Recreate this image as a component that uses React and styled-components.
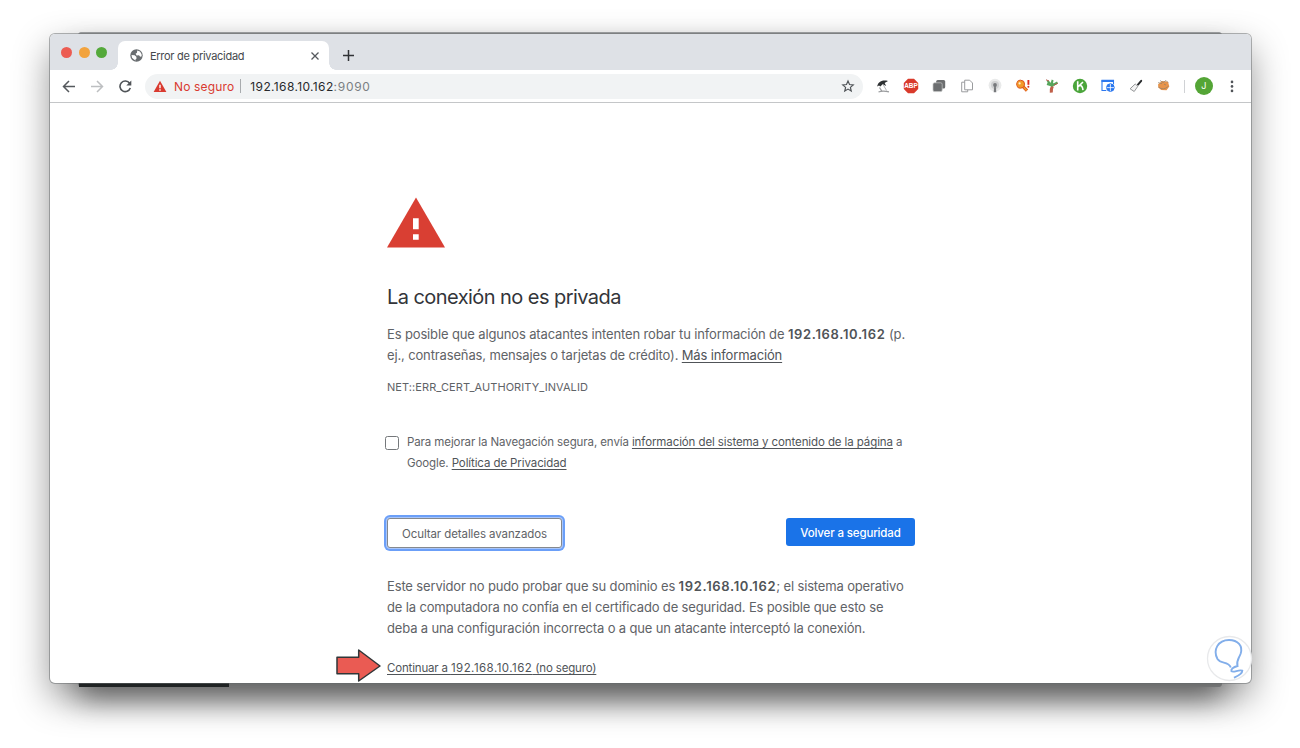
import React from 'react';
import styled, { createGlobalStyle } from 'styled-components';

const GlobalStyle = createGlobalStyle`
  * {
    box-sizing: border-box;
  }
  body {
    margin: 0;
    background: #fff;
    font-family: Inter, 'Liberation Sans', sans-serif;
    -webkit-font-smoothing: antialiased;
  }
`;

const Desktop = styled.div`
  position: relative;
  width: 1300px;
  height: 748px;
  padding: 34px 49px 64px 50px;
  overflow: hidden;
`;

const BackWindow = styled.div`
  position: absolute;
  left: 78px;
  top: 32px;
  width: 1144px;
  height: 655px;
  background: #a3a5a5;
  border: 1px solid #a4a6a8;
  border-radius: 3px;
  box-shadow: 0 16px 26px -3px rgba(0, 0, 0, 0.42);
`;

const BackStrip = styled.div`
  position: absolute;
  left: 0;
  bottom: -1px;
  width: 150px;
  height: 5px;
  background: #2f3435;
`;

const Window = styled.div`
  position: relative;
  height: 649px;
  display: flex;
  flex-direction: column;
  background: #fff;
  border-radius: 5px;
  box-shadow: 0 0 0 1px rgba(100, 104, 106, 0.5), 0 15px 36px rgba(0, 0, 0, 0.42);
`;

const TabStrip = styled.div`
  height: 36px;
  flex: none;
  display: flex;
  align-items: flex-end;
  background: #dee1e6;
  border-radius: 5px 5px 0 0;
`;

const Lights = styled.div`
  width: 68px;
  height: 36px;
  padding: 13px 0 0 11px;
  display: flex;
  gap: 6.5px;
`;

const Light = styled.span`
  width: 11px;
  height: 11px;
  border-radius: 50%;
  background: ${props => props.color};
`;

const Tab = styled.div`
  position: relative;
  width: 211px;
  height: 29px;
  padding: 0 9px 0 12px;
  display: flex;
  align-items: center;
  background: #fff;
  border-radius: 7px 7px 0 0;
  svg {
    flex: none;
  }
  &::before,
  &::after {
    content: '';
    position: absolute;
    bottom: 0;
    width: 7px;
    height: 7px;
  }
  &::before {
    left: -7px;
    background: radial-gradient(circle at 0 0, transparent 6.5px, #fff 7px);
  }
  &::after {
    right: -7px;
    background: radial-gradient(circle at 100% 0, transparent 6.5px, #fff 7px);
  }
`;

const TabTitle = styled.span`
  flex: 1;
  margin-left: 7px;
  font-size: 11px;
  letter-spacing: -0.28px;
  color: #45494d;
  white-space: nowrap;
`;

const NewTab = styled.div`
  height: 29px;
  margin-left: 14px;
  display: flex;
  align-items: center;
`;

const Toolbar = styled.div`
  height: 33px;
  flex: none;
  display: flex;
  align-items: center;
  padding: 0 12px 0 12px;
  background: #fff;
  border-bottom: 1px solid #c4c6c8;
`;

const NavIcons = styled.div`
  width: 83px;
  display: flex;
  gap: 14px;
`;

const AddressBar = styled.div`
  width: 718px;
  height: 25px;
  padding: 0 8px;
  display: flex;
  align-items: center;
  border-radius: 13px;
  background: #f1f3f4;
  font-size: 12px;
  white-space: nowrap;
`;

const NotSecure = styled.span`
  margin-left: 7px;
  color: #d93a30;
  letter-spacing: 0.16px;
`;

const Divider = styled.span`
  width: 1px;
  height: 14px;
  margin: 0 9px 0 6px;
  background: #a8abae;
`;

const Url = styled.span`
  flex: 1;
  color: #27292c;
  letter-spacing: 0.36px;
  span {
    color: #7b7f83;
    letter-spacing: 0.7px;
  }
`;

const Extensions = styled.div`
  display: flex;
  margin-left: 12px;
  gap: 12.1px;
  svg {
    flex: none;
  }
`;

const BarLine = styled.span`
  width: 1px;
  height: 13px;
  margin: 0 10px 0 12px;
  background: #d0d2d5;
`;

const Avatar = styled.span`
  width: 18px;
  height: 18px;
  margin-right: 12px;
  border-radius: 50%;
  background: #54a536;
  color: #fff;
  font-size: 9px;
  line-height: 18px;
  text-align: center;
`;

const Page = styled.main`
  width: 528px;
  margin-left: 337px;
  padding-top: 94px;
  color: #5f6367;
`;

const WarningSign = styled.svg`
  display: block;
  width: 58px;
  height: 51px;
`;

const Title = styled.h1`
  margin: 34px 0 0;
  font-size: 20px;
  line-height: 30px;
  font-weight: 400;
  letter-spacing: ${props => props.spacing}px;
  color: #333539;
`;

const Line = styled.div`
  height: 21px;
  line-height: 21px;
  font-size: ${props => props.size || 13}px;
  letter-spacing: ${props => props.spacing || 0}px;
  white-space: nowrap;
  strong {
    font-weight: 600;
    color: #505458;
    letter-spacing: 0.66px;
  }
`;

const Host = styled.span`
  letter-spacing: 0.46px;
`;

const Link = styled.a`
  text-decoration: underline;
  text-decoration-thickness: 1px;
  text-underline-offset: 2px;
  color: #505458;
`;

const Intro = styled.section`
  margin-top: 12px;
`;

const ErrorCode = styled.div`
  margin-top: 11px;
`;

const OptIn = styled.label`
  display: flex;
  margin-top: 34px;
  margin-left: -2px;
`;

const CheckBox = styled.span`
  width: 14px;
  height: 14px;
  margin: 4px 8px 0 0;
  border: 1px solid #75787b;
  border-radius: 2.5px;
`;

const Buttons = styled.div`
  display: flex;
  justify-content: space-between;
  align-items: flex-start;
  margin-top: 44px;
`;

const DetailsButton = styled.button`
  width: 175px;
  height: 30px;
  padding: 2px 0 0;
  border: 1px solid #85898d;
  border-radius: 3px;
  background: #fff;
  box-shadow: 0 0 0 1px #a9c6fb, 0 0 0 3px #6b9ff8;
  font: 400 11.5px Inter, sans-serif;
  letter-spacing: ${props => props.spacing}px;
  color: #5f6367;
`;

const SafetyButton = styled.button`
  width: 129px;
  height: 28px;
  padding: 2px 0 0;
  border: 0;
  border-radius: 3px;
  background: #1a73e8;
  font: 500 11.5px Inter, sans-serif;
  letter-spacing: ${props => props.spacing}px;
  color: #fff;
`;

const Details = styled.section`
  margin-top: 28px;
`;

const Proceed = styled.div`
  margin-top: 19px;
`;

const Arrow = styled.svg`
  position: absolute;
  left: 335px;
  top: 648px;
`;

const Bubble = styled.svg`
  position: absolute;
  left: 1206px;
  top: 635px;
`;

const Globe = () => (
  <svg width="13" height="13" viewBox="0 0 13 13">
    <circle cx="6.5" cy="6.5" r="6.2" fill="#6a6e71" />
    <path d="M1.5 6l3.2.3 1.6 1.5.3 1.6-1 .8v1.2L4 10.6 2 8.8z" fill="#fff" />
    <path d="M7.2 1.4L10 2.6l1.6 2.6.1 2-1.5.5-1.2-1.5-2.4.2-1-1.6L7 3.7z" fill="#fff" />
  </svg>
);

const ExtensionIcons = () => (
  <Extensions>
    {/* umbrella */}
    <svg width="16" height="16" viewBox="0 0 16 16">
      <path d="M2.2 8.6C3 4.2 6.4 1.6 13 3L9.6 5l1.6 3L7.6 6.2 5.4 8.4 4 7.4z" fill="#2c2f31" />
      <path d="M8 6.5l3.6 6" stroke="#b4b6b8" strokeWidth="1" />
      <path d="M4.5 9.5l2.6 4M3.5 14q4-1.6 10.5-.2" fill="none" stroke="#9a9c9e" strokeWidth="1.3" />
    </svg>
    {/* ad block */}
    <svg width="16" height="16" viewBox="0 0 16 16">
      <path d="M5 .8h6L15.2 5v6L11 15.2H5L.8 11V5z" fill="#d93a2b" />
      <text x="8" y="10.4" textAnchor="middle" fontFamily="Liberation Sans, sans-serif" fontSize="6.4" fontWeight="700" fill="#fff">ABP</text>
    </svg>
    {/* stacked windows */}
    <svg width="16" height="16" viewBox="0 0 16 16">
      <rect x="5.2" y="2" width="9" height="8.5" rx="1.5" fill="#6c6e70" />
      <rect x="2" y="4.8" width="9.2" height="8.8" rx="1.5" fill="#6c6e70" stroke="#c4c5c6" strokeWidth=".7" />
    </svg>
    {/* copied pages */}
    <svg width="16" height="16" viewBox="0 0 16 16" fill="#fff" stroke="#9a9c9e">
      <path d="M2.7 4.2h6v9.6h-6z" />
      <path d="M5.7 2.2h5l2.8 2.8v6.8H5.7z" />
    </svg>
    {/* broadcast */}
    <svg width="16" height="16" viewBox="0 0 16 16">
      <circle cx="8" cy="7.2" r="6.4" fill="#e9eaea" />
      <circle cx="8" cy="7" r="4" fill="#cfd0d1" />
      <circle cx="8" cy="7" r="1.9" fill="#77797c" />
      <path d="M7.2 8h1.6l.5 6.3H6.7z" fill="#77797c" />
    </svg>
    {/* key */}
    <svg width="16" height="16" viewBox="0 0 16 16">
      <path d="M7 7.5l5 5.2" stroke="#dc5420" strokeWidth="3.2" />
      <path d="M7 7.5l4.7 4.9" stroke="#f1a12d" strokeWidth="1.4" />
      <circle cx="5.6" cy="6.2" r="4" fill="#f29a2a" stroke="#dc5420" strokeWidth="1" />
      <circle cx="4.6" cy="5.4" r="1.1" fill="#fff0d9" />
      <path d="M13.4 2v4.8" stroke="#da2d23" strokeWidth="1.9" />
      <circle cx="13.4" cy="8.8" r="1" fill="#da2d23" />
    </svg>
    {/* palm */}
    <svg width="16" height="16" viewBox="0 0 16 16" fill="none">
      <path d="M7.3 14.6q-.3-4 1.2-6.6" stroke="#c0604a" strokeWidth="3" />
      <path d="M8.5 8L3.5 3M8 7.5L3 6M8.3 7q-.8-3 .4-5M8 7.5l5.5-3" stroke="#56a65c" strokeWidth="2.2" />
      <path d="M2 1.8l3 1.2M10 7.3l3.8-2.1" stroke="#b45c4c" strokeWidth="1" />
    </svg>
    {/* green k */}
    <svg width="16" height="16" viewBox="0 0 16 16">
      <circle cx="8" cy="8" r="7.2" fill="#4ba53b" />
      <path d="M5.7 3.3v9.3M11 4L6.3 8.6M7.5 7.5q3-.5 3.5 4.7" fill="none" stroke="#fff" strokeWidth="1.6" />
    </svg>
    {/* web window */}
    <svg width="16" height="16" viewBox="0 0 16 16" fill="none" stroke="#2c78ef">
      <path d="M6.3 12.5H2V2.3h11.5v4" strokeWidth="1.1" />
      <path d="M1.5 3h12.5" strokeWidth="2" />
      <circle cx="10.4" cy="9.6" r="3.8" fill="#2c78ef" />
      <path d="M6.8 9.6h7.2M10.4 6v7.2" stroke="#fff" strokeWidth=".8" />
    </svg>
    {/* brush */}
    <svg width="16" height="16" viewBox="0 0 16 16">
      <path d="M13.2 2.8L10 6.6" stroke="#292c2e" strokeWidth="2" strokeLinecap="round" />
      <path d="M7.2 6l2.6 2.3-3.6 5.2-4.1-2.7z" fill="#f4f4f4" stroke="#888a8c" strokeWidth=".9" />
    </svg>
    {/* cookie */}
    <svg width="16" height="16" viewBox="0 0 16 16">
      <path d="M2 6.5L6 3l6 .7 1.3 4.8-2.8 3.7-5.3-.2L2.4 9.4z" fill="#e8944a" />
      <path d="M2 4.6l4 1M4 2.5l3 2 3-2 2.2 2.2M2.4 9q5 4 10-.7M8 6.2l2 .8" fill="none" stroke="#8f7f6c" strokeWidth=".7" />
    </svg>
  </Extensions>
);

const App = () => {
  return (
    <Desktop>
      <GlobalStyle />
      <BackWindow>
        <BackStrip />
      </BackWindow>
      <Window>
        <TabStrip>
          <Lights>
            <Light color="#ec5c52" />
            <Light color="#f2a33d" />
            <Light color="#54a93b" />
          </Lights>
          <Tab>
            <Globe />
            <TabTitle>Error de privacidad</TabTitle>
            <svg width="10" height="10" viewBox="0 0 10 10" stroke="#55595d" strokeWidth="1.3">
              <path d="M1.5 1.5l7 7M8.5 1.5l-7 7" />
            </svg>
          </Tab>
          <NewTab>
            <svg width="11" height="11" viewBox="0 0 11 11" stroke="#303336" strokeWidth="1.5">
              <path d="M5.5 0v11M0 5.5h11" />
            </svg>
          </NewTab>
        </TabStrip>
        <Toolbar>
          <NavIcons>
            <svg width="14" height="14" viewBox="0 0 14 14" fill="none" stroke="#55595d" strokeWidth="1.5">
              <path d="M13 7.5H1.8M7 2L1.5 7.5 7 13" />
            </svg>
            <svg width="14" height="14" viewBox="0 0 14 14" fill="none" stroke="#bdbfc1" strokeWidth="1.5">
              <path d="M1 7.5h11.2M7 2l5.5 5.5L7 13" />
            </svg>
            <svg width="14" height="14" viewBox="0 0 14 14" fill="none" stroke="#505458" strokeWidth="1.6">
              <path d="M11.6 4.2A5.3 5.3 0 1 0 12.3 9" />
              <path d="M13.3 1.5v5h-5z" fill="#505458" stroke="none" />
            </svg>
          </NavIcons>
          <AddressBar>
            <svg width="14" height="13" viewBox="0 0 14 13">
              <path d="M7 .7L13.4 12H.6z" fill="#d93a30" />
              <path d="M7 4.7v3.6M7 9.2v1.5" stroke="#fff" strokeWidth="1.4" />
            </svg>
            <NotSecure>No seguro</NotSecure>
            <Divider />
            <Url>192.168.10.162<span>:9090</span></Url>
            <svg width="14" height="14" viewBox="0 0 24 24" fill="none" stroke="#4f5357" strokeWidth="2">
              <path d="M12 3.5l2.6 6 6.4.6-4.9 4.3 1.5 6.3-5.6-3.4-5.6 3.4 1.5-6.3L3 10.1l6.4-.6z" />
            </svg>
          </AddressBar>
          <ExtensionIcons />
          <BarLine />
          <Avatar>J</Avatar>
          <svg width="14" height="14" viewBox="0 0 14 14" fill="#505458">
            <circle cx="7" cy="2.9" r="1.3" />
            <circle cx="7" cy="7.4" r="1.3" />
            <circle cx="7" cy="11.9" r="1.3" />
          </svg>
        </Toolbar>
        <Page>
          <WarningSign viewBox="0 0 58 51">
            <path d="M29 .4L58 50.5H0z" fill="#d93f33" />
            <path d="M26 21.2h5.7v11H26zM26 37.2h5.7v5.6H26z" fill="#fff" />
          </WarningSign>
          <Title spacing={-0.56}>La conexión no es privada</Title>
          <Intro>
            <Line spacing={-0.14}>
              Es posible que algunos atacantes intenten robar tu información de <strong>192.168.10.162</strong> (p.
            </Line>
            <Line spacing={-0.14}>
              ej., contraseñas, mensajes o tarjetas de crédito). <Link>Más información</Link>
            </Line>
          </Intro>
          <ErrorCode>
            <Line size={11} spacing={0.07}>NET::ERR_CERT_AUTHORITY_INVALID</Line>
          </ErrorCode>
          <OptIn>
            <CheckBox />
            <div>
              <Line size={11.5} spacing={-0.1}>
                Para mejorar la Navegación segura, envía <Link>información del sistema y contenido de la página</Link> a
              </Line>
              <Line size={11.5} spacing={-0.1}>
                Google. <Link>Política de Privacidad</Link>
              </Line>
            </div>
          </OptIn>
          <Buttons>
            <DetailsButton spacing={-0.09}>Ocultar detalles avanzados</DetailsButton>
            <SafetyButton spacing={-0.14}>Volver a seguridad</SafetyButton>
          </Buttons>
          <Details>
            <Line spacing={-0.15}>
              Este servidor no pudo probar que su dominio es <strong>192.168.10.162</strong>; el sistema operativo
            </Line>
            <Line spacing={-0.15}>de la computadora no confía en el certificado de seguridad. Es posible que esto se</Line>
            <Line spacing={-0.16}>deba a una configuración incorrecta o a que un atacante interceptó la conexión.</Line>
          </Details>
          <Proceed>
            <Line size={11.5} spacing={-0.17}>
              <Link>Continuar a <Host>192.168.10.162</Host> (no seguro)</Link>
            </Line>
          </Proceed>
        </Page>
      </Window>
      <Arrow width="48" height="36" viewBox="0 0 48 36">
        <path d="M2 9.3h21.7V2L45 18 23.7 33v-7.3H2z" fill="#ea5b53" stroke="#303638" strokeWidth="1.5" strokeLinejoin="round" />
      </Arrow>
      <Bubble width="47" height="47" viewBox="0 0 47 47" fill="none">
        <circle cx="23.5" cy="23.5" r="22" fill="#fff" stroke="#e8e9eb" strokeWidth="1.3" />
        <path
          d="M24.8 32.5C22 25.5 15 29.5 11.5 24 6.5 15 12 5 23 5c9 0 14 6 11.7 13.5-1.7 5-4.7 7-3.2 12.5-4 1.2-7 3-6 5.3 2.5 1.6 7-2 10.8-.7 0 4-5.2 5.7-8.4 7"
          stroke="#82aeea"
          strokeWidth="1.9"
        />
      </Bubble>
    </Desktop>
  );
};

export default App;
